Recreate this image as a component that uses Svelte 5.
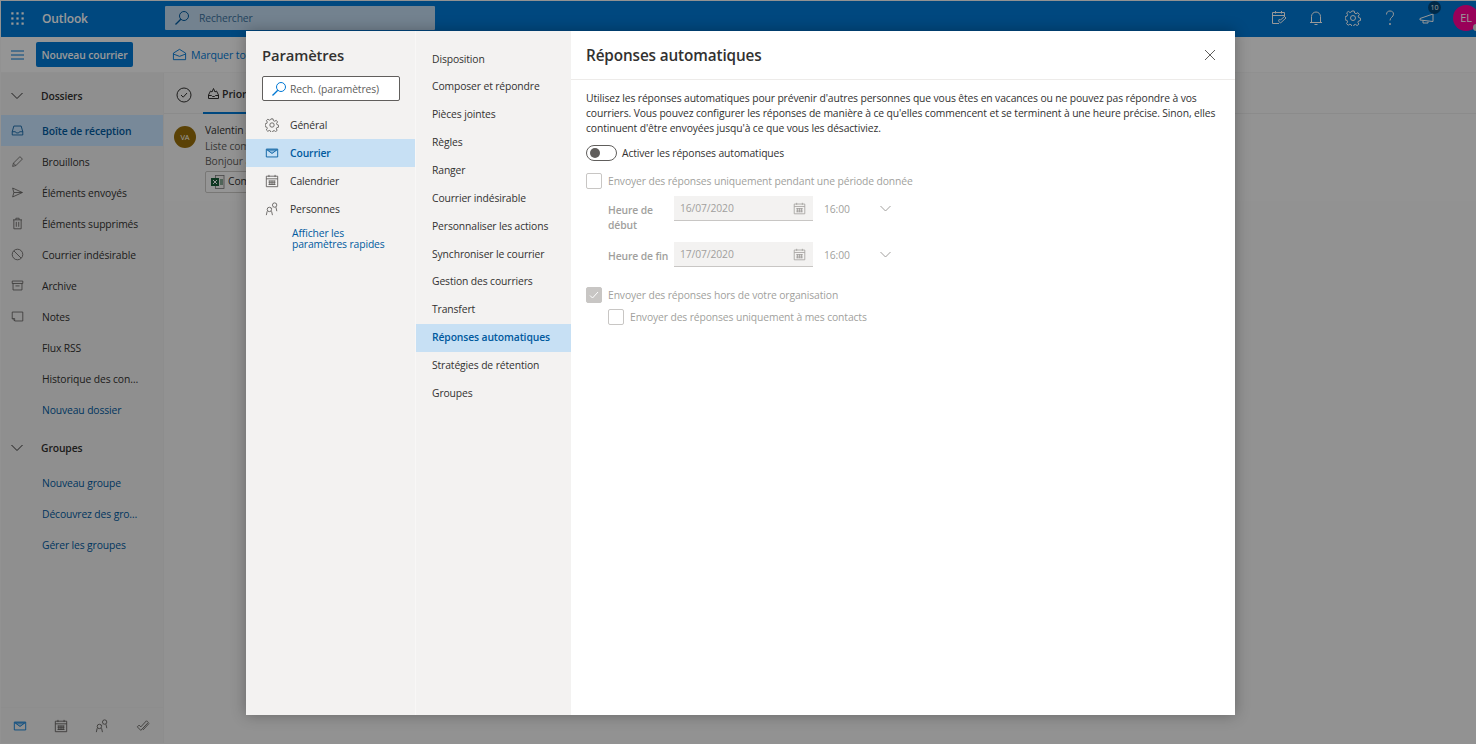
<script>
  const folders = [
    ['Boîte de réception', 'inbox', true],
    ['Brouillons', 'pen'],
    ['Éléments envoyés', 'send'],
    ['Éléments supprimés', 'trash'],
    ['Courrier indésirable', 'ban'],
    ['Archive', 'archive'],
    ['Notes', 'note'],
    ['Flux RSS', ''],
    ['Historique des conversations', ''],
  ];
  const groupLinks = ['Nouveau groupe', 'Découvrez des groupes', 'Gérer les groupes'];
  const mailNav = ['Disposition', 'Composer et répondre', 'Pièces jointes', 'Règles', 'Ranger', 'Courrier indésirable', 'Personnaliser les actions', 'Synchroniser le courrier', 'Gestion des courriers', 'Transfert', 'Réponses automatiques', 'Stratégies de rétention', 'Groupes'];
  const dates = [
    { label: 'Heure de début', date: '16/07/2020' },
    { label: 'Heure de fin', date: '17/07/2020' },
  ];
</script>

{#snippet icon(name, size = 16)}
  <svg class="ic" width={size} height={size} viewBox="0 0 16 16" fill="none" stroke="currentColor" stroke-width="1">
    {#if name === 'inbox'}
      <path d="M3.5 2.5h9l2 7v4h-13v-4zM1.500 9.500h4l1 1.500h3l1-1.500h4" />
    {:else if name === 'pen'}
      <path d="M2 14l1-4 8-8 3 3-8 8zM3 10l3 3" />
    {:else if name === 'send'}
      <path d="M2 2.500l12 5.500-12 5.500 1.500-5.500zM3.500 8H14" />
    {:else if name === 'trash'}
      <path d="M2.500 3.500h11M6 3.500V1.500h4v2M3.500 3.500v11h9v-11M6.500 6v6M9.500 6v6" />
    {:else if name === 'ban'}
      <circle cx="8" cy="8" r="6.500" /><path d="M3.500 3.500l9 9" />
    {:else if name === 'archive'}
      <path d="M1.500 2.500h13v3h-13zM2.500 5.500v8h11v-8M5.500 8.500h5" />
    {:else if name === 'note'}
      <path d="M1.500 2.500h13v11h-10l-3-3zM1.500 10.500h3v3" />
    {:else if name === 'mail'}
      <path d="M1.500 3.500h13v9h-13z" /><path d="M2.500 4.500h11L8 8.500z" fill="currentColor" fill-opacity=".25" />
    {:else if name === 'cal'}
      <path d="M1.500 2.500h13v12h-13zM1.500 5.500h13M4.500 1v2.500M11.500 1v2.500M4 8h8M4 10h8M4 12h8M5.500 7.500v5M8 7.500v5M10.500 7.500v5" />
    {:else if name === 'people'}
      <circle cx="5" cy="8.500" r="2.500" /><path d="M1.500 15l1-4.500M8.500 15l-1-4.500" /><circle cx="11" cy="3.500" r="2.500" /><path d="M8 6.500l-.5 1M13.500 10.500l-1-4.500" />
    {:else if name === 'check2'}
      <path d="M1.500 9l4 4 8.500-9-2-2-6.500 7-2-2zM8 12.500l7-7.500" />
    {:else if name === 'gear'}
      <path d="M6.800 1h2.400l.4 2 1.500.7 1.800-1 1.500 1.800-1.200 1.600.4 1.400 1.900.7v2.300l-2 .5-.6 1.400 1 1.700-1.800 1.500-1.600-1.200-1.500.5-.6 1.800H6.800l-.5-1.900-1.400-.6-1.700 1-1.700-1.600 1.100-1.700-.5-1.500-1.900-.5V6.700l1.900-.6.500-1.500-1-1.700 1.700-1.500 1.700 1.100 1.400-.6z" /><circle cx="8" cy="8" r="2.500" />
    {/if}
  </svg>
{/snippet}

<div class="app">
  <header class="top">
    <svg class="waffle" width="13" height="13" viewBox="0 0 14 14" fill="currentColor">
      {#each [1.500, 7, 12.500] as y}{#each [1.500, 7, 12.500] as x}<rect x={x - 1.200} y={y - 1.200} width="2.400" height="2.400" />{/each}{/each}
    </svg>
    <span class="brand">Outlook</span>
    <div class="search">
      <svg width="16" height="16" viewBox="0 0 16 16" fill="none" stroke="currentColor"><circle cx="10" cy="6" r="4.500" /><path d="M6.800 9.200L1.500 14.500" stroke-width="1.300" /></svg>
      <span>Rechercher</span>
    </div>
    <div class="top-right">
      <svg width="16" height="16" viewBox="0 0 16 16" fill="none" stroke="currentColor"><path d="M8 13.500H1.500v-11h12V7M1.500 5.500h12M4.500 1v2.500M10.500 1v2.500M7.500 11l2 2 5.500-5-1.500-1.500-4 3.500-1-1z" /></svg>
      <svg width="16" height="16" viewBox="0 0 16 16" fill="none" stroke="currentColor"><path d="M3.500 12.500v-6a4.500 4.500 0 0 1 9 0v6zM2 12.500h12M6.500 14.500h3" /></svg>
      {@render icon('gear')}
      <svg width="16" height="16" viewBox="0 0 16 16" fill="none" stroke="currentColor"><path d="M4.500 4.500C4.500 2 6 1 8 1s3.500 1 3.500 3.200c0 3-3.500 3-3.500 6.300" /><circle cx="8" cy="14" r=".6" fill="currentColor" /></svg>
      <div class="feedback">
        <svg width="16" height="16" viewBox="0 0 16 16" fill="none" stroke="currentColor"><path d="M1 8.500l13-4.500v7.500l-13-1.500zM4 10.500v2.500h5v-1.500" /></svg>
        <span class="badge">10</span>
      </div>
      <div class="avatar">EL<i></i></div>
    </div>
  </header>

  <div class="toolbar">
    <svg class="burger" width="13" height="10" viewBox="0 0 13 10" stroke="currentColor"><path d="M0 1h13M0 5h13M0 9h13" /></svg>
    <button class="new">Nouveau courrier</button>
    <span class="mark">
      <svg width="15" height="15" viewBox="0 0 16 16" fill="none" stroke="currentColor"><path d="M1.500 6.500L8 2.500l6.500 4v7h-13zM1.500 7.500L8 10l6.500-2.500" /></svg>
      Marquer tout comme lu
    </span>
  </div>

  <div class="body">
    <nav class="side">
      <div class="side-scroll">
        <div class="section first">
          <svg class="chev" width="12" height="8" viewBox="0 0 12 8" fill="none" stroke="currentColor"><path d="M.5 1L6 6.500 11.500 1" /></svg>
          <b>Dossiers</b>
        </div>
        {#each folders as [name, ic, active]}
          <div class="folder" class:active>
            <span class="slot">{#if ic}{@render icon(ic, 13)}{/if}</span>
            <span class="name">{name}</span>
          </div>
        {/each}
        <div class="folder link"><span class="slot"></span><span class="name">Nouveau dossier</span></div>
        <div class="section second">
          <svg class="chev" width="12" height="8" viewBox="0 0 12 8" fill="none" stroke="currentColor"><path d="M.5 1L6 6.500 11.500 1" /></svg>
          <b>Groupes</b>
        </div>
        {#each groupLinks as g}
          <div class="folder link"><span class="slot"></span><span class="name">{g}</span></div>
        {/each}
      </div>
      <div class="modules">
        <span class="on">{@render icon('mail', 14)}</span>
        <span>{@render icon('cal', 14)}</span>
        <span>{@render icon('people', 14)}</span>
        <span>{@render icon('check2', 14)}</span>
      </div>
    </nav>
    <section class="list">
      <div class="tabs">
        <svg class="all" width="16" height="16" viewBox="0 0 16 16" fill="none" stroke="currentColor"><circle cx="8" cy="8" r="7" /><path d="M5 8l2.200 2.200L11 6" /></svg>
        <div class="tab">
          <svg width="13" height="13" viewBox="0 0 13 13" fill="none" stroke="currentColor"><path d="M1.500 8l2-4 1.500 1 1.500-3.500L8 5l1.500-1 2 4v3.500h-10zM1.500 8.500h3l1 1h2l1-1h3" /></svg>
          <b>Prioritaire</b>
        </div>
      </div>
      <div class="msg">
        <div class="va">VA</div>
        <div class="msg-text">
          <div>Valentin Aubert</div>
          <div class="dim">Liste complète</div>
          <div class="dim">Bonjour à tous</div>
          <div class="chip">
            <svg width="14" height="14" viewBox="0 0 14 14"><rect x="4.500" y=".5" width="8.500" height="13" fill="#f3f2f1" stroke="#777" stroke-width=".8" /><rect x="0" y="3" width="8" height="8" fill="#185c37" /><path d="M2 5l4 4M6 5L2 9" stroke="#fff" stroke-width="1" /><path d="M9 5h3M9 7h3M9 9h3" stroke="#185c37" /></svg>
            Compte rendu
          </div>
        </div>
      </div>
    </section>
  </div>

  <div class="overlay"></div>

  <div class="modal">
    <aside class="m-left">
      <h1>Paramètres</h1>
      <div class="m-search">
        <svg width="16" height="16" viewBox="0 0 16 16" fill="none" stroke="#0078d4"><circle cx="10" cy="6" r="4.500" /><path d="M6.800 9.200L1.500 14.500" stroke-width="1.300" /></svg>
        <span>Rech. (paramètres)</span>
      </div>
      <div class="cat">{@render icon('gear', 14)}<span>Général</span></div>
      <div class="cat sel">{@render icon('mail', 14)}<span>Courrier</span></div>
      <div class="cat">{@render icon('cal', 14)}<span>Calendrier</span></div>
      <div class="cat">{@render icon('people', 14)}<span>Personnes</span></div>
      <a class="quick" href="#quick">Afficher les<br />paramètres rapides</a>
    </aside>
    <div class="m-mid">
      {#each mailNav as n}
        <div class="sub" class:sel={n === 'Réponses automatiques'}>{n}</div>
      {/each}
    </div>
    <main class="m-right">
      <div class="m-head">
        <h2>Réponses automatiques</h2>
        <svg width="12" height="12" viewBox="0 0 12 12" stroke="#605e5c" stroke-width="1"><path d="M1 1l10 10M11 1L1 11" /></svg>
      </div>
      <div class="m-body">
        <p>Utilisez les réponses automatiques pour prévenir d'autres personnes que vous êtes en vacances ou ne pouvez pas répondre à vos courriers. Vous pouvez configurer les réponses de manière à ce qu'elles commencent et se terminent à une heure précise. Sinon, elles continuent d'être envoyées jusqu'à ce que vous les désactiviez.</p>
        <div class="toggle-row"><span class="toggle"><i></i></span><span>Activer les réponses automatiques</span></div>
        <div class="chk-row first-chk"><span class="box"></span><span>Envoyer des réponses uniquement pendant une période donnée</span></div>
        {#each dates as d}
          <div class="date-row">
            <span class="d-label">{d.label}</span>
            <div class="d-field">
              <span>{d.date}</span>
              {@render icon('cal', 13)}
            </div>
            <span class="d-time">16:00</span>
            <svg class="d-chev" width="11" height="7" viewBox="0 0 11 7" fill="none" stroke="currentColor"><path d="M.5 1l5 5 5-5" /></svg>
          </div>
        {/each}
        <div class="chk-row org"><span class="box on"><svg width="12" height="12" viewBox="0 0 12 12" fill="none" stroke="#fff"><path d="M2 6.500l2.500 2.500L10 3" /></svg></span><span>Envoyer des réponses hors de votre organisation</span></div>
        <div class="chk-row nested"><span class="box"></span><span>Envoyer des réponses uniquement à mes contacts</span></div>
      </div>
    </main>
  </div>
</div>

<style>
  :global(body) { margin: 0; background: #fff; }
  .app {
    position: relative; width: 100%; height: 100vh; overflow: hidden;
    font-family: "Open Sans", "Noto Sans", sans-serif; font-size: 10.350px; letter-spacing: -.12px; color: #323130;
    display: flex; flex-direction: column; background: #f4f4f4;
    box-sizing: border-box; padding: 1px 0 1px 1px;
  }
  .ic { display: block; flex: none; }

  .top { height: 36px; flex: none; box-sizing: border-box; padding-bottom: 2px; background: #0078d4; color: #fff; display: flex; align-items: center; }
  .waffle { margin-left: 10px; }
  .brand { margin-left: 18px; font-size: 12px; font-weight: 600; width: 123px; }
  .search { width: 270px; height: 24px; background: #c0d9ef; color: #005a9e; display: flex; align-items: center; gap: 9px; padding-left: 9px; box-sizing: border-box; border-radius: 1px; }
  .search span { color: #3a6f9c; }
  .top-right { margin-left: auto; display: flex; align-items: center; gap: 21px; margin-right: -1px; }
  .feedback { position: relative; display: flex; }
  .badge { position: absolute; top: -9px; left: 9px; width: 13px; height: 13px; border-radius: 50%; background: #004578; font-size: 7px; line-height: 13px; text-align: center; }
  .avatar { position: relative; width: 26px; height: 26px; border-radius: 50%; background: #ff0095; font-size: 11px; line-height: 26px; text-align: center; margin-right: -2px; margin-left: -3px; }
  .avatar i { position: absolute; right: -1px; bottom: 0; width: 7px; height: 7px; border-radius: 50%; background: #ddd; }

  .toolbar { height: 35px; flex: none; display: flex; align-items: center; background: #f9f9f9; color: #0078d4; border-bottom: 1px solid #f0f0f0; }
  .burger { margin-left: 10px; color: #0078d4; }
  .new { margin-left: 12px; width: 97px; height: 25px; padding: 0; border: 0; border-radius: 2px; background: #0078d4; color: #fff; font: 600 10.350px "Open Sans", sans-serif; letter-spacing: -.12px; }
  .mark { margin-left: 39px; display: flex; align-items: center; gap: 4px; font-size: 10.600px; white-space: nowrap; }

  .body { flex: 1; display: flex; min-height: 0; }
  .side { width: 163px; flex: none; display: flex; flex-direction: column; background: #efefef; border-right: 1px solid #ebebeb; box-sizing: border-box; }
  .side-scroll { flex: 1; }
  .section { display: flex; align-items: center; height: 31px; color: #323130; }
  .section.first { margin-top: 7px; margin-bottom: 4px; }
  .section.second { margin-top: 7px; margin-bottom: 4px; }
  .chev { margin: 0 18px 0 10px; }
  .section b { font-weight: 600; }
  .folder { height: 31px; display: flex; align-items: center; }
  .folder.active { background: #c8e4ff; color: #005a9e; font-weight: 600; }
  .slot { width: 41px; padding-left: 10px; box-sizing: border-box; flex: none; }
  .slot .ic { color: #605e5c; }
  .active .slot .ic { color: #005a9e; }
  .name { overflow: hidden; white-space: nowrap; text-overflow: ellipsis; padding-right: 21px; }
  .link { color: #005a9e; }
  .modules { height: 35px; display: flex; align-items: center; border-top: 1px solid #ebebeb; padding-left: 12px; gap: 27px; color: #605e5c; }
  .modules .on { color: #0078d4; }

  .list { flex: 1; background: #f4f4f4; }
  .tabs { height: 41px; display: flex; align-items: center; padding-left: 12px; gap: 11px; border-bottom: 1px solid #e8e8e8; box-sizing: border-box; background: #f6f6f6; }
  .all { margin-top: 4px; }
  .tab { height: 41px; display: flex; align-items: center; gap: 2px; border-bottom: 2px solid #0078d4; box-sizing: border-box; padding: 3px 4px 0; font-size: 10.600px; }
  .tab b { font-weight: 600; }
  .msg { display: flex; padding: 9px 0 0 10px; gap: 9px; height: 87px; box-sizing: border-box; background: #f6f6f6; line-height: 15.500px; white-space: nowrap; }
  .va { width: 22px; height: 22px; margin-top: 3px; border-radius: 50%; background: #986f0b; color: #fff; font-size: 7.500px; line-height: 22px; text-align: center; }
  .dim { color: #605e5c; }
  .chip { display: inline-flex; align-items: center; gap: 3px; height: 20px; padding: 0 6px 0 5px; margin-top: 1px; border: 1px solid #c8c6c4; border-radius: 2px; background: #f9f9f9; }

  .overlay { position: absolute; inset: 0; background: rgba(0, 0, 0, .4); }

  .modal {
    position: absolute; left: 246px; top: 31px; width: 989px; height: 684px;
    display: flex; background: #fff; box-shadow: 0 0 14px rgba(0, 0, 0, .3);
  }
  .m-left { width: 170px; flex: none; background: #f3f2f1; box-sizing: border-box; border-right: 1px solid #f8f7f6; }
  h1 { margin: 13px 0 10px 16px; font-size: 14.800px; line-height: 22px; font-weight: 600; color: #323130; }
  .m-search { margin: 0 15px 10px 16px; height: 25px; box-sizing: border-box; background: #fff; border: 1px solid #605e5c; border-radius: 2px; display: flex; align-items: center; gap: 3px; padding-left: 8px; color: #605e5c; }
  .cat { height: 28px; display: flex; align-items: center; gap: 11px; padding-left: 19px; color: #323130; }
  .cat .ic { color: #605e5c; }
  .cat.sel { background: #c7e0f4; color: #005a9e; font-weight: 600; }
  .cat.sel .ic { color: #005a9e; }
  .quick { display: block; margin: 5px 0 0 46px; color: #005a9e; line-height: 11px; text-decoration: none; }
  .m-mid { width: 155px; flex: none; box-sizing: border-box; background: #f3f2f1; padding-top: 14.500px; }
  .sub { height: 27.870px; line-height: 27.870px; padding-left: 16px; color: #323130; }
  .sub.sel { background: #c7e0f4; color: #005a9e; font-weight: 600; }

  .m-right { flex: 1; min-width: 0; }
  .m-head { height: 49px; box-sizing: border-box; border-bottom: 1px solid #edebe9; display: flex; align-items: center; justify-content: space-between; padding: 0 19px 0 15px; }
  h2 { margin: 0; font-size: 15.300px; font-weight: 600; color: #323130; }
  .m-body { padding: 11px 15px 0; }
  p { margin: 0; line-height: 15px; width: 632px; color: #323130; }
  .toggle-row { display: flex; align-items: center; gap: 5px; margin-top: 9px; height: 16px; }
  .toggle { width: 31px; height: 16px; box-sizing: border-box; border: 1px solid #605e5c; border-radius: 8px; display: flex; align-items: center; padding-left: 3px; }
  .toggle i { width: 10px; height: 10px; border-radius: 50%; background: #605e5c; }
  .chk-row { display: flex; align-items: center; gap: 6px; color: #a19f9d; height: 16px; }
  .first-chk { margin-top: 12px; margin-bottom: 7px; }
  .box { width: 16px; height: 16px; box-sizing: border-box; border: 1px solid #c8c6c4; border-radius: 2px; display: flex; align-items: center; justify-content: center; flex: none; }
  .box.on { background: #c8c6c4; }
  .date-row { display: flex; align-items: flex-start; color: #a19f9d; margin-left: 22px; margin-bottom: 10px; }
  .d-label { width: 66px; font-weight: 600; line-height: 15px; padding-top: 7px; margin-bottom: -1px; }
  .d-field { width: 139px; height: 25px; box-sizing: border-box; background: #f3f2f1; border-bottom: 1px solid #c8c6c4; display: flex; align-items: center; justify-content: space-between; padding: 0 7px 0 6px; }
  .d-time { margin-left: 11px; line-height: 26px; width: 56px; }
  .d-chev { margin-top: 9px; }
  .org { margin-top: 19px; }
  .nested { margin: 6px 0 0 22px; }
</style>
